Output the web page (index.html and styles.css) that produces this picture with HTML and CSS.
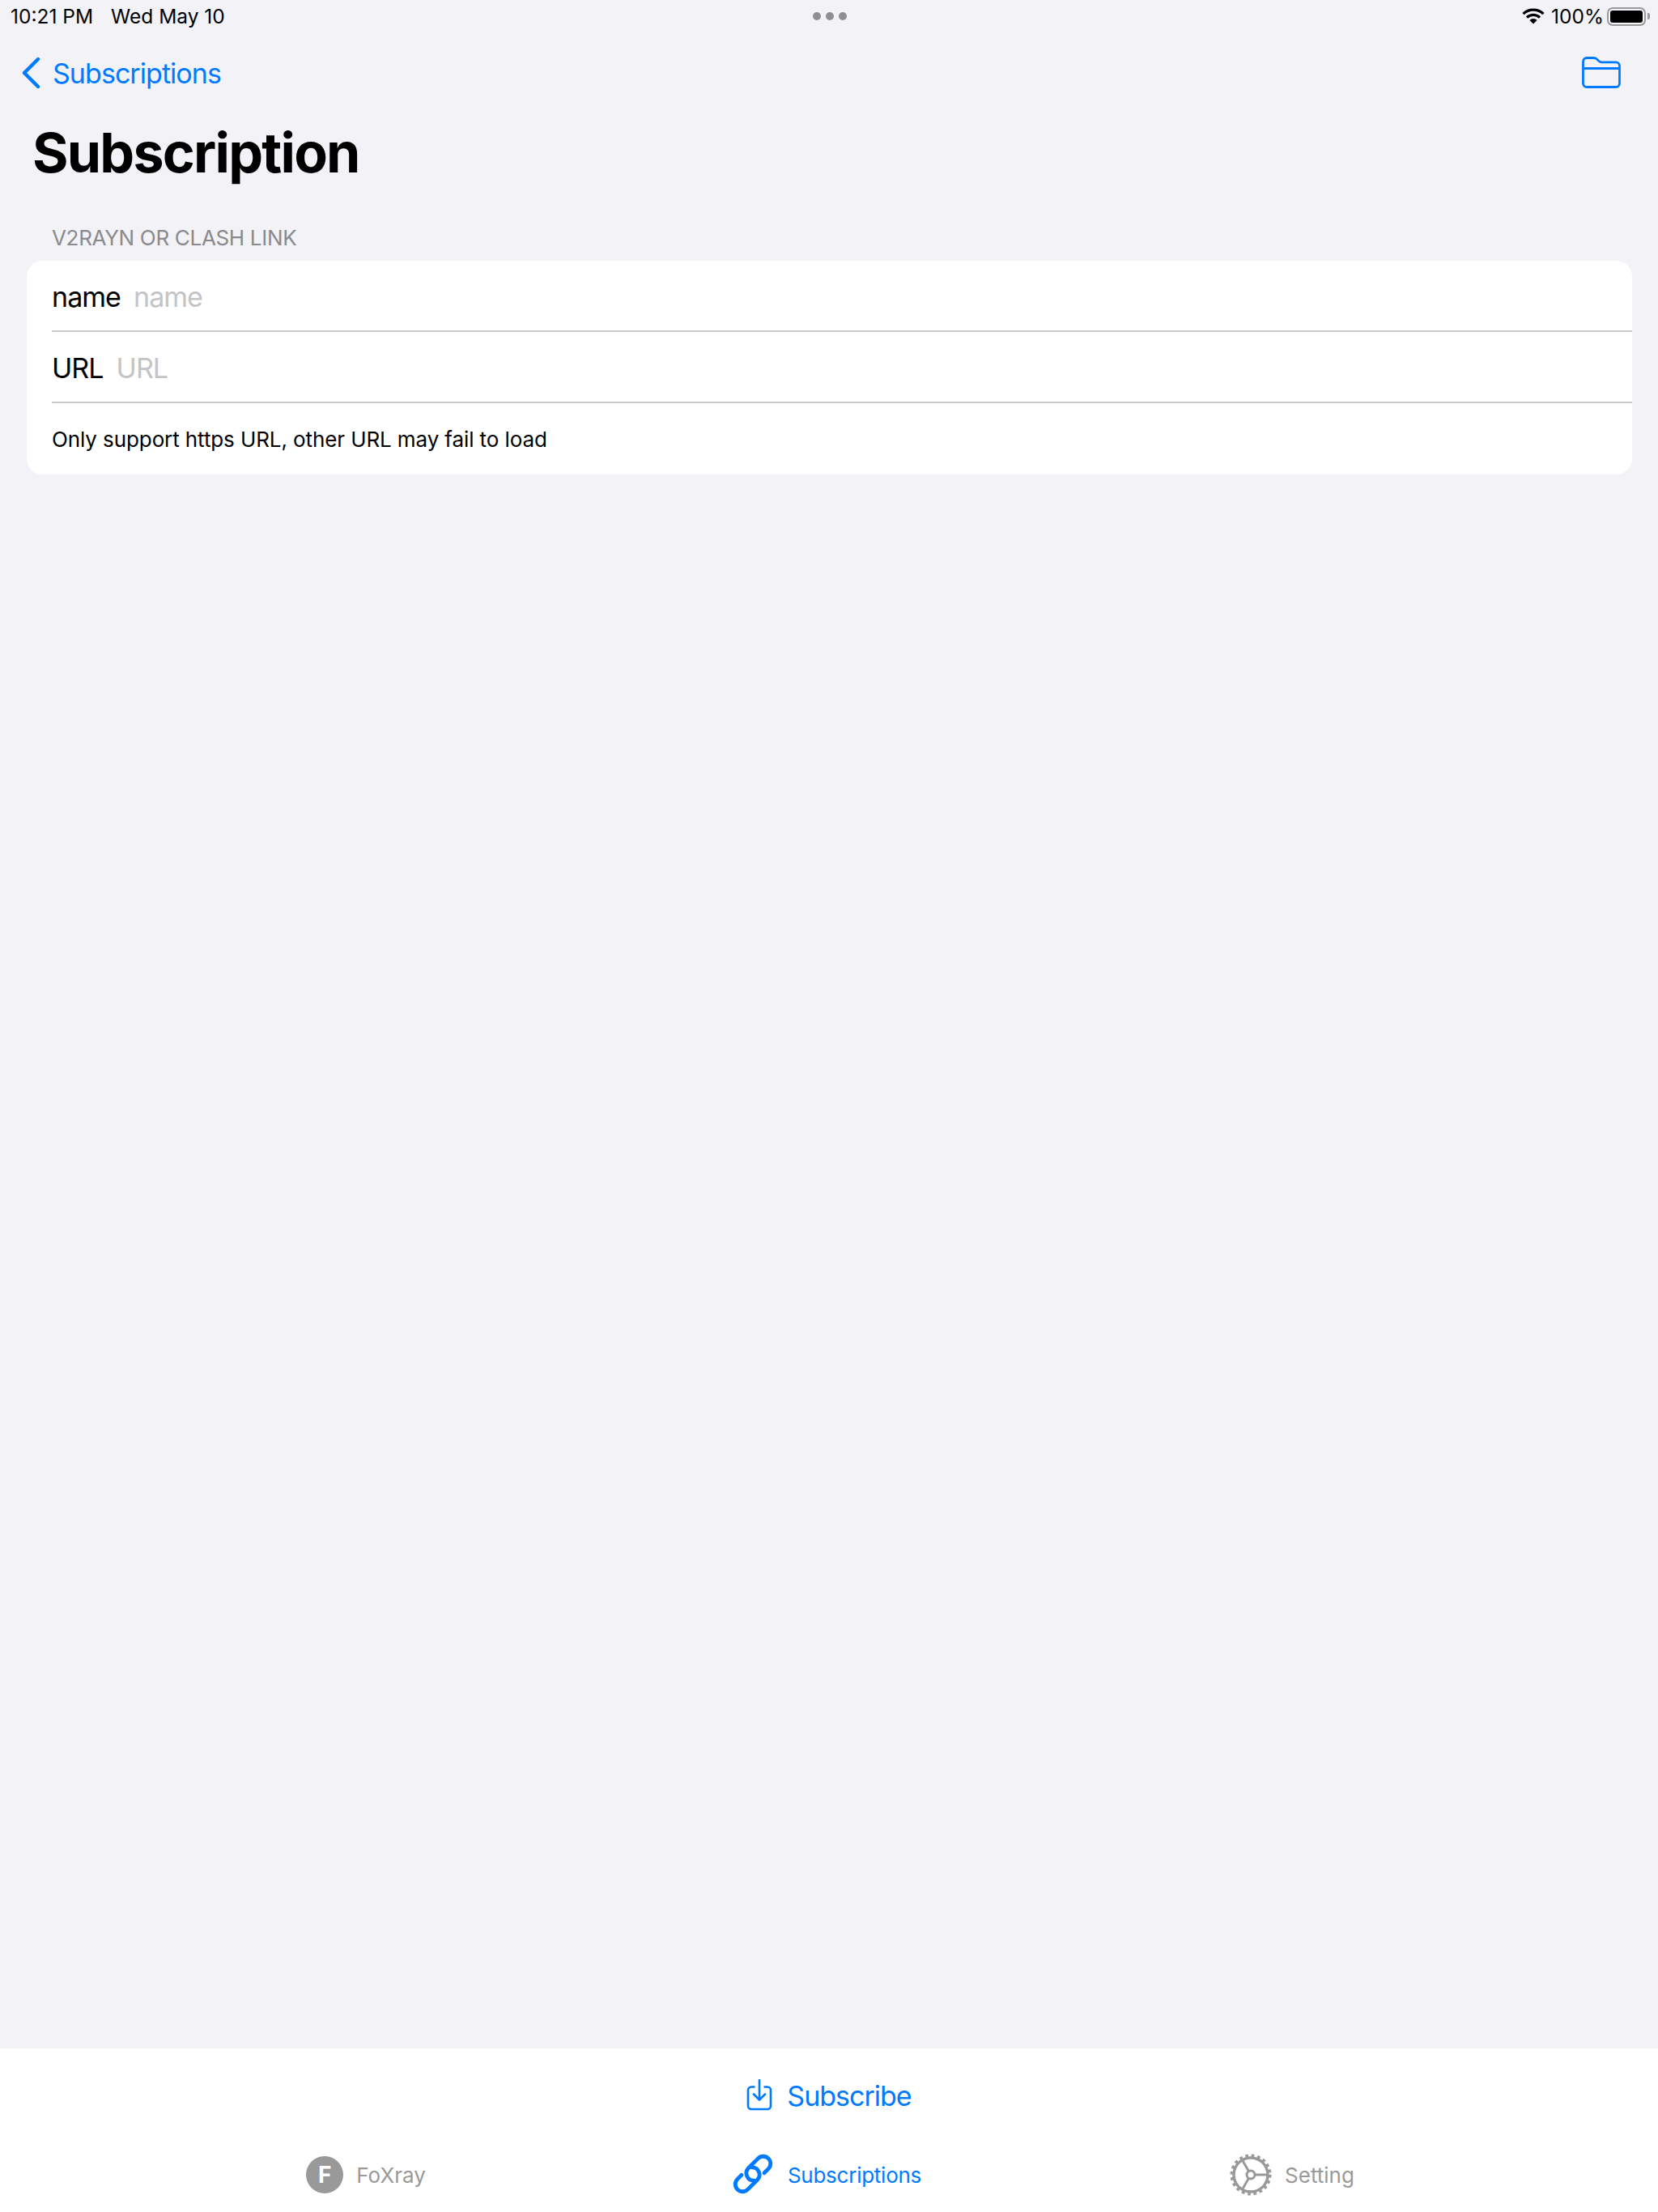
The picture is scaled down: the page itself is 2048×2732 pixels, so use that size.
FILE: index.html
```html
<!DOCTYPE html>
<html lang="en">
<head>
  <title>Subscription</title>
  <link rel="stylesheet" href="styles.css">
</head>
<body>
  <div class="status-bar">
    <div class="status-left"><span>10:21 PM</span><span>Wed May 10</span></div>
    <div class="status-dots"><i></i><i></i><i></i></div>
    <div class="status-right">
      <svg class="wifi" width="28" height="20" viewBox="0 0 28 20">
        <path d="M1.5 7.2a18 18 0 0 1 25 0" fill="none" stroke="#000" stroke-width="3.2"/>
        <path d="M6 11.6a11.6 11.6 0 0 1 16 0" fill="none" stroke="#000" stroke-width="3.2"/>
        <path d="M14 19.5l-4.6-4.6a6.6 6.6 0 0 1 9.2 0z" fill="#000"/>
      </svg>
      <span>100%</span>
      <div class="battery"><div class="battery-fill"></div></div>
      <div class="battery-nub"></div>
    </div>
  </div>

  <div class="nav-bar">
    <a class="back-link">
      <svg width="24" height="40" viewBox="0 0 24 40">
        <path d="M21 3L4 20l17 17" fill="none" stroke="#007aff" stroke-width="4.4" stroke-linecap="round" stroke-linejoin="round"/>
      </svg>
      <span>Subscriptions</span>
    </a>
    <svg class="folder" width="48" height="40" viewBox="0 0 48 40">
      <path d="M1.5 9V6a4.500 4.500 0 0 1 4.500-4.500h8.500c2 0 3 .6 4.200 1.700L21 5.500c1 .9 2 1.300 3.500 1.300H42a4.500 4.500 0 0 1 4.500 4.500V33a4.500 4.500 0 0 1-4.500 4.500H6A4.500 4.500 0 0 1 1.500 33z" fill="none" stroke="#007aff" stroke-width="2.800"/>
      <path d="M1.500 14.500h45" fill="none" stroke="#007aff" stroke-width="2.800"/>
    </svg>
  </div>

  <h1 class="page-title">Subscription</h1>

  <main class="content">
    <div class="section-label">V2RAYN OR CLASH LINK</div>
    <div class="card">
      <div class="row"><span>name</span><span class="placeholder">name</span></div>
      <div class="row"><span>URL</span><span class="placeholder">URL</span></div>
      <div class="row-note">Only support https URL, other URL may fail to load</div>
    </div>
  </main>

  <footer class="bottom-bar">
    <div class="subscribe">
      <svg width="32" height="40" viewBox="0 0 32 40">
        <path d="M10.500 9.500H6a4 4 0 0 0-4 4V33a4 4 0 0 0 4 4h20a4 4 0 0 0 4-4V13.500a4 4 0 0 0-4-4h-4.500" fill="none" stroke="#007aff" stroke-width="2.600"/>
        <path d="M16 1v24M9 18.500l7 7 7-7" fill="none" stroke="#007aff" stroke-width="2.600" stroke-linecap="round" stroke-linejoin="round"/>
      </svg>
      <span>Subscribe</span>
    </div>
    <nav class="tabs">
      <div class="tab">
        <div class="tab-avatar">F</div>
        <span>FoXray</span>
      </div>
      <div class="tab tab-active">
        <svg class="link-icon" width="54" height="54" viewBox="1.500 1.500 45 45">
          <g transform="rotate(-45 24 24)" fill="none" stroke="#007aff" stroke-width="4" stroke-linecap="round">
            <path d="M33 31.500h6a7.500 7.500 0 0 0 0-15H25a7.500 7.500 0 0 0-5 13"/>
            <path d="M15 16.500H9a7.500 7.500 0 0 0 0 15h14a7.500 7.500 0 0 0 5-13"/>
          </g>
        </svg>
        <span>Subscriptions</span>
      </div>
      <div class="tab">
        <svg width="52" height="52" viewBox="0 0 52 52">
          <g fill="none" stroke="#999">
            <circle cx="26" cy="26" r="21" stroke-width="3.400"/>
            <circle cx="26" cy="26" r="23.500" stroke-width="4" stroke-dasharray="3.690 3.690"/>
            <circle cx="26" cy="26" r="5" stroke-width="3"/>
            <path d="M31 26h15M23.500 21.700L16 8.700M23.500 30.300L16 43.300" stroke-width="3"/>
          </g>
        </svg>
        <span>Setting</span>
      </div>
    </nav>
  </footer>
</body>
</html>
```

FILE: styles.css
```css
html, body {
  margin: 0;
  padding: 0;
  width: 2048px;
  height: 2732px;
  font-family: "Inter", "Liberation Sans", sans-serif;
  background: #f2f2f7;
  color: #000;
}

body {
  display: flex;
  flex-direction: column;
}

.status-bar {
  display: grid;
  grid-template-columns: 1fr auto 1fr;
  align-items: center;
  height: 40px;
  padding: 0 10px 0 13px;
  font-size: 24.500px;
}

.status-left {
  display: flex;
  gap: 22px;
}

.status-dots {
  display: flex;
  gap: 6px;
  margin-left: -2px;
}

.status-dots i {
  width: 10px;
  height: 10px;
  border-radius: 50%;
  background: #8e8e93;
}

.status-right {
  display: flex;
  align-items: center;
  justify-content: flex-end;
  gap: 4px;
}

.wifi {
  margin-right: 4px;
}

.battery {
  width: 48px;
  height: 23px;
  box-sizing: border-box;
  border: 2px solid #999;
  border-radius: 7px;
  padding: 2px;
}

.battery-fill {
  height: 100%;
  background: #000;
  border-radius: 3px;
}

.battery-nub {
  width: 3px;
  height: 8px;
  margin-left: -2px;
  background: #999;
  border-radius: 0 2px 2px 0;
}

.nav-bar {
  display: flex;
  align-items: center;
  justify-content: space-between;
  height: 40px;
  padding: 30px 46px 0 26px;
}

.back-link {
  display: flex;
  align-items: center;
  gap: 15px;
  font-size: 34px;
  letter-spacing: -0.95px;
  color: #007aff;
}

.page-title {
  margin: 37px 0 0 40px;
  font-size: 68px;
  font-weight: 700;
  letter-spacing: -1.750px;
  line-height: 82px;
}

.content {
  flex: 1;
  padding: 0 32px 0 33px;
}

.section-label {
  margin: 49px 0 0 31px;
  font-size: 26px;
  letter-spacing: -0.32px;
  line-height: 32px;
  color: #8a8a8e;
}

.card {
  margin-top: 12px;
  background: #fff;
  border-radius: 20px;
  padding-left: 31px;
}

.row {
  display: flex;
  align-items: center;
  gap: 16px;
  height: 84px;
  padding-top: 2px;
  font-size: 34px;
  letter-spacing: -0.95px;
  border-bottom: 2px solid #cbcbcd;
}

.placeholder {
  color: #c4c4c6;
}

.row-note {
  display: flex;
  align-items: center;
  height: 88px;
  font-size: 26px;
  letter-spacing: -0.1px;
}

.bottom-bar {
  height: 202px;
  background: #fff;
}

.subscribe {
  display: flex;
  align-items: center;
  justify-content: center;
  gap: 18px;
  height: 116px;
  font-size: 34px;
  letter-spacing: -1px;
  color: #007aff;
}

.tabs {
  display: grid;
  grid-template-columns: repeat(3, 572px);
  justify-content: center;
  margin-top: 10px;
}

.tab {
  display: flex;
  align-items: center;
  justify-content: center;
  gap: 16px;
  height: 60px;
  font-size: 26px;
  color: #999;
}

.tab-active {
  padding-right: 7px;
  color: #007aff;
  letter-spacing: -0.25px;
}

.link-icon {
  margin-top: -3px;
}

.tab-avatar {
  display: flex;
  align-items: center;
  justify-content: center;
  width: 46px;
  height: 46px;
  border-radius: 50%;
  background: #999;
  color: #fff;
  font-size: 28px;
  font-weight: 700;
}
```
